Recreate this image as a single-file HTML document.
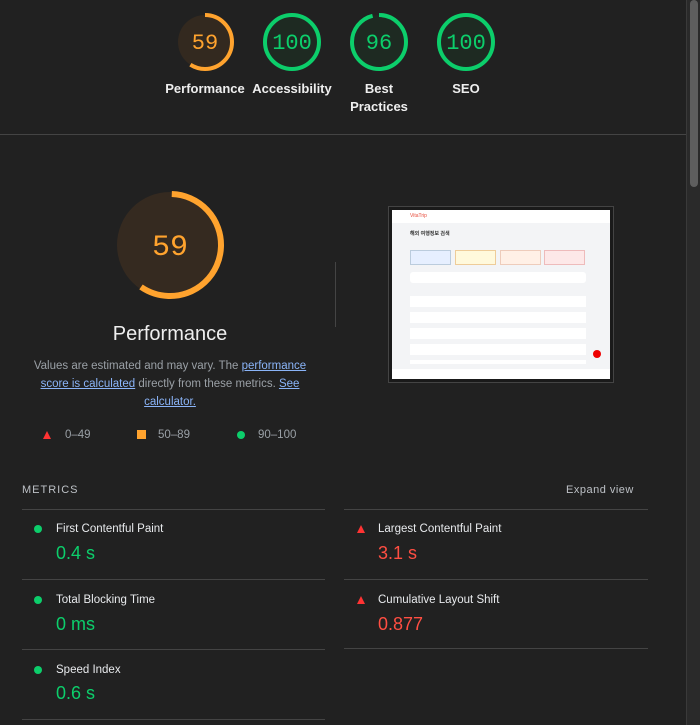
<!DOCTYPE html>
<html><head><meta charset="utf-8"><style>
*{margin:0;padding:0;box-sizing:border-box}
body{width:700px;height:725px;background:#212121;font-family:"Liberation Sans",sans-serif;color:#e8eaed;position:relative;overflow:hidden}
.abs{position:absolute}
.lbl{position:absolute;font-size:13px;font-weight:bold;text-align:center;width:100px;line-height:18px;color:#eee}
.line{position:absolute;height:1px;background:#444}
.mt{position:absolute;font-size:11.5px;color:#e8eaed}
.mv{position:absolute;font-size:18px}
.green{color:#0cce6b}.red{color:#ff4e42}
.dot{position:absolute;width:8px;height:8px;border-radius:50%;background:#0cce6b}
.tri{position:absolute;width:0;height:0;border-left:4px solid transparent;border-right:4px solid transparent;border-bottom:8px solid #ff3333}
a{color:#8ab4f8;text-decoration:underline}
</style></head><body>
<div class="abs" style="left:686px;top:0;width:14px;height:725px;background:#2a2a2a;border-left:1px solid #3a3a3a"></div>
<div class="abs" style="left:690px;top:0;width:8px;height:187px;background:#5e5e5e;border-radius:4px"></div>

<svg class="abs" style="left:0;top:0" width="686" height="134">
<circle cx="205" cy="42" r="27" fill="#33291f"/>
<circle cx="205" cy="42" r="27" fill="none" stroke="#ffa32e" stroke-width="4" stroke-dasharray="100.1 200" transform="rotate(-90 205 42)"/>
<circle cx="292" cy="42" r="27" fill="#1e2a22" stroke="#0cce6b" stroke-width="4"/>
<circle cx="379" cy="42" r="27" fill="#1e2a22"/>
<circle cx="379" cy="42" r="27" fill="none" stroke="#0cce6b" stroke-width="4" stroke-dasharray="162.9 200" transform="rotate(-90 379 42)"/>
<circle cx="466" cy="42" r="27" fill="#1e2a22" stroke="#0cce6b" stroke-width="4"/>
<g font-family="Liberation Mono, monospace" font-size="22" text-anchor="middle">
<text x="205" y="49" fill="#ffa32e">59</text>
<text x="292" y="49" fill="#0cce6b">100</text>
<text x="379" y="49" fill="#0cce6b">96</text>
<text x="466" y="49" fill="#0cce6b">100</text>
</g>
</svg>
<div class="lbl" style="left:155px;top:80px">Performance</div>
<div class="lbl" style="left:242px;top:80px">Accessibility</div>
<div class="lbl" style="left:329px;top:80px">Best<br>Practices</div>
<div class="lbl" style="left:416px;top:80px">SEO</div>
<div class="line" style="left:0;top:134px;width:686px"></div>

<svg class="abs" style="left:110px;top:185px" width="120" height="120">
<circle cx="60" cy="60" r="53" fill="#352a20"/>
<circle cx="60" cy="60" r="51" fill="none" stroke="#ffa32e" stroke-width="6" stroke-dasharray="189 400" transform="rotate(-88 60 60)"/>
<text x="60" y="70" font-family="Liberation Mono, monospace" font-size="30" fill="#ffa32e" text-anchor="middle">59</text>
</svg>
<div class="abs" style="left:70px;top:323px;width:200px;text-align:center;font-size:20px;color:#eee">Performance</div>
<div class="abs" style="left:30px;top:357px;width:280px;text-align:center;font-size:11.5px;line-height:18px;color:#9aa0a6">Values are estimated and may vary. The <a>performance score is calculated</a> directly from these metrics. <a>See calculator.</a></div>
<div class="tri" style="left:43px;top:431px"></div>
<div class="abs" style="left:65px;top:429px;font-size:11.5px;color:#9aa0a6">0–49</div>
<div class="abs" style="left:137px;top:430px;width:9px;height:9px;background:#ffa32e"></div>
<div class="abs" style="left:158px;top:429px;font-size:11.5px;color:#9aa0a6">50–89</div>
<div class="abs" style="left:237px;top:431px;width:8px;height:8px;border-radius:50%;background:#0cce6b"></div>
<div class="abs" style="left:258px;top:429px;font-size:11.5px;color:#9aa0a6">90–100</div>
<div class="abs" style="left:335px;top:262px;width:1px;height:65px;background:#444"></div>

<div class="abs" style="left:388px;top:206px;width:226px;height:177px;border:1px solid #444;background:#1a1a1a;padding:3px">
<div style="background:#f3f4f6;width:100%;height:100%;position:relative;overflow:hidden">
<div style="background:#fff;height:13px;font-size:5px;color:#e74c3c;padding:3px 0 0 18px">VitaTrip</div>
<div style="position:absolute;left:18px;top:20px;font-size:5px;color:#333;font-weight:bold">해외 여행정보 검색</div>
<div style="position:absolute;left:18px;top:40px;width:41px;height:15px;background:#e6efff;border:1px solid #bcd"></div>
<div style="position:absolute;left:63px;top:40px;width:41px;height:15px;background:#fff9dc;border:1px solid #ec9"></div>
<div style="position:absolute;left:108px;top:40px;width:41px;height:15px;background:#fff0e6;border:1px solid #ecb"></div>
<div style="position:absolute;left:152px;top:40px;width:41px;height:15px;background:#fde8e8;border:1px solid #ebb"></div>
<div style="position:absolute;left:18px;top:62px;width:176px;height:11px;background:#fff;border-radius:3px"></div>
<div style="position:absolute;left:18px;top:84px;width:176px;height:70px;background:repeating-linear-gradient(#f3f4f6 0 2px,#fff 2px 13px,#f3f4f6 13px 16px)"></div>
<div style="position:absolute;left:0;bottom:0;width:100%;height:10px;background:#fff"></div>
<div style="position:absolute;left:201px;top:140px;width:8px;height:8px;border-radius:50%;background:#e00"></div>
</div></div>

<div class="abs" style="left:22px;top:484px;font-size:11px;letter-spacing:1px;color:#bdc1c6">METRICS</div>
<div class="abs" style="left:566px;top:484px;font-size:11px;letter-spacing:.5px;color:#bdc1c6">Expand view</div>
<div class="line" style="left:22px;top:509px;width:303px"></div>
<div class="line" style="left:344px;top:509px;width:304px"></div>
<div class="line" style="left:22px;top:579px;width:303px"></div>
<div class="line" style="left:344px;top:579px;width:304px"></div>
<div class="line" style="left:22px;top:649px;width:303px"></div>
<div class="line" style="left:344px;top:648px;width:304px"></div>
<div class="line" style="left:22px;top:719px;width:303px"></div>

<div class="dot" style="left:34px;top:525px"></div><div class="mt" style="left:56px;top:523px">First Contentful Paint</div><div class="mv green" style="left:56px;top:543px">0.4 s</div>
<div class="dot" style="left:34px;top:596px"></div><div class="mt" style="left:56px;top:594px">Total Blocking Time</div><div class="mv green" style="left:56px;top:614px">0 ms</div>
<div class="dot" style="left:34px;top:666px"></div><div class="mt" style="left:56px;top:664px">Speed Index</div><div class="mv green" style="left:56px;top:683px">0.6 s</div>
<div class="tri" style="left:357px;top:525px"></div><div class="mt" style="left:378px;top:523px">Largest Contentful Paint</div><div class="mv red" style="left:378px;top:543px">3.1 s</div>
<div class="tri" style="left:357px;top:596px"></div><div class="mt" style="left:378px;top:594px">Cumulative Layout Shift</div><div class="mv red" style="left:378px;top:614px">0.877</div>
</body></html>
